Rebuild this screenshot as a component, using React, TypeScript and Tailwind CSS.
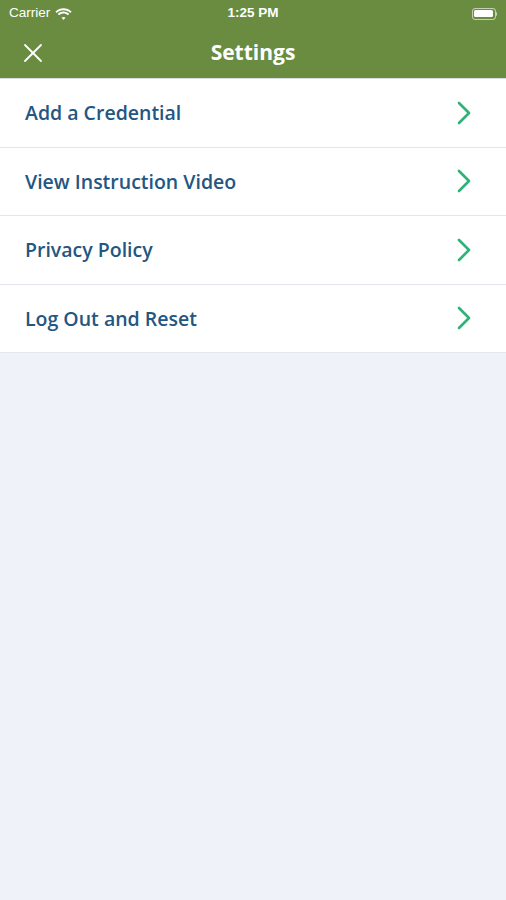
import { X, ChevronRight } from 'lucide-react';

const ITEMS = ['Add a Credential', 'View Instruction Video', 'Privacy Policy', 'Log Out and Reset'];

function Wifi() {
  return (
    <svg width="17" height="12" viewBox="0 0 17 12" fill="white">
      <path d="M8.5 2.2c2.6 0 5 1 6.8 2.7l1.3-1.4C14.5 1.4 11.6.2 8.5.2S2.5 1.4.4 3.5l1.3 1.4C3.5 3.2 5.9 2.2 8.5 2.2z" />
      <path d="M8.5 5.6c1.7 0 3.2.6 4.4 1.7l1.3-1.4C12.7 4.5 10.7 3.6 8.5 3.6S4.3 4.5 2.8 5.9l1.3 1.4c1.2-1.1 2.7-1.7 4.4-1.7z" />
      <path d="M8.5 9c.8 0 1.5.3 2 .8l-2 2.1-2-2.1c.5-.5 1.2-.8 2-.8z" />
    </svg>
  );
}

export default function App() {
  return (
    <div className="w-[506px] h-[900px] bg-[#eff2f8] flex flex-col" style={{ fontFamily: '"Open Sans", sans-serif' }}>
      <div className="bg-[#698c40] text-white">
        <div className="h-[27px] flex items-center justify-between px-[9px] relative">
          <div className="flex items-center gap-[5px] text-[13.5px]" style={{ fontFamily: '"Liberation Sans", sans-serif' }}>
            <span>Carrier</span>
            <Wifi />
          </div>
          <span className="absolute left-1/2 -translate-x-1/2 text-[13.5px] font-semibold" style={{ fontFamily: '"Liberation Sans", sans-serif' }}>1:25 PM</span>
          <div className="flex items-center">
            <div className="w-[24px] h-[12px] rounded-[3px] border border-white/60 p-[1.5px]">
              <div className="w-full h-full bg-white rounded-[1.5px]" />
            </div>
            <div className="w-[1.5px] h-[4px] bg-white/60 rounded-r" />
          </div>
        </div>
        <div className="h-[51px] flex items-center relative">
          <X className="ml-[17px] w-[32px] h-[32px]" strokeWidth={1.35} />
          <span className="absolute left-1/2 -translate-x-1/2 text-[21px] font-bold">Settings</span>
        </div>
      </div>
      <div className="h-px bg-[#d9dde3]" />
      <div className="bg-white">
        {ITEMS.map((item) => (
          <div key={item} className="h-[68.5px] flex items-center justify-between border-b border-[#e3e6eb] pl-[25px] pr-[22px]">
            <span className="text-[19.5px] font-semibold text-[#235681]">{item}</span>
            <ChevronRight className="w-[40px] h-[40px] text-[#2eb27a]" strokeWidth={1.6} />
          </div>
        ))}
      </div>
    </div>
  );
}
